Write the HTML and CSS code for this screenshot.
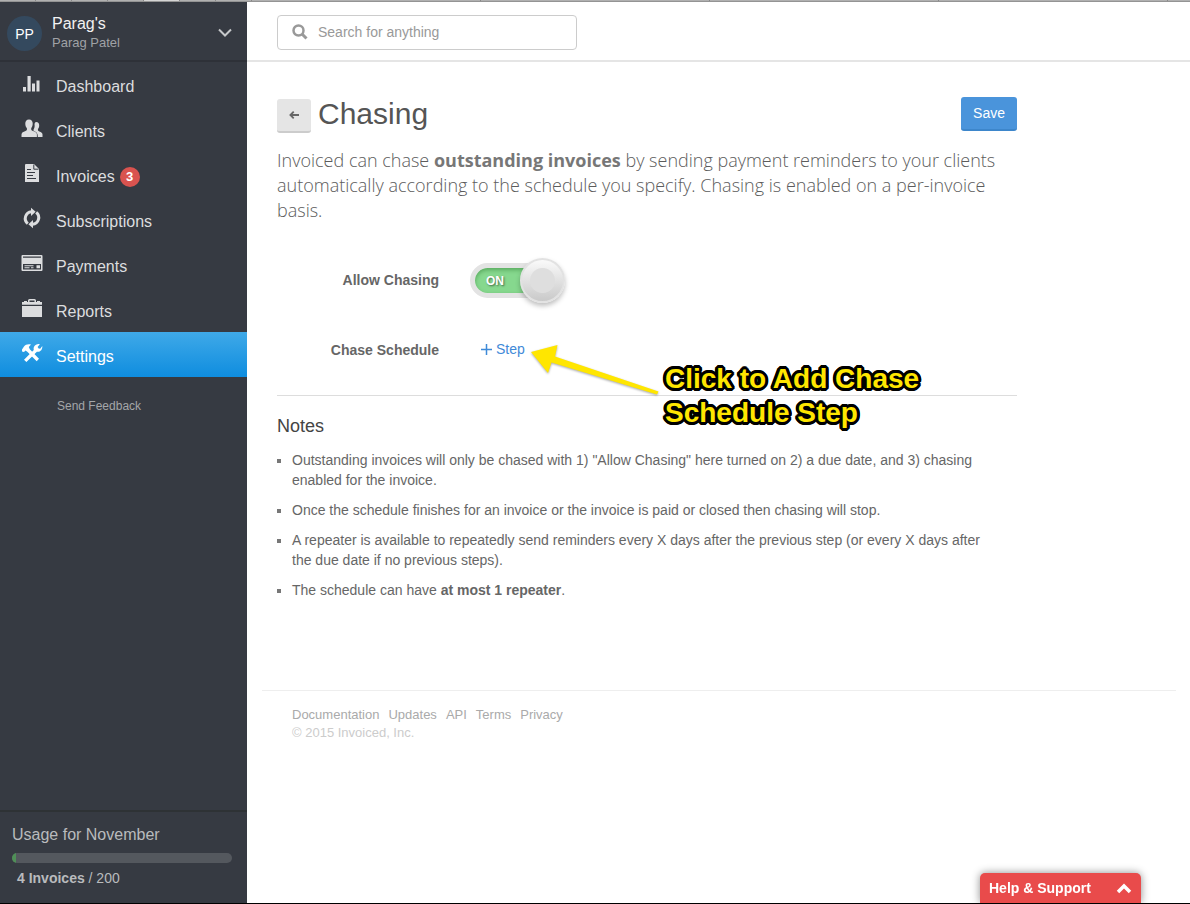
FILE: index.html
```html
<!DOCTYPE html>
<html lang="en">
<head>
<meta charset="utf-8">
<title>Chasing</title>
<link rel="stylesheet" href="styles.css">
</head>
<body>
<div class="tabstrip"><i></i><i></i><i></i><i></i><i class="current"></i><i></i><i></i><i class="wide"></i><i class="wide"></i><i class="wide"></i><i class="wide"></i></div>
<div class="app">
  <aside class="sidebar">
    <button class="account" type="button">
      <span class="avatar">PP</span>
      <span class="account-text"><span class="company">Parag's</span><span class="person">Parag Patel</span></span>
      <svg class="chevron" width="16" height="10" viewBox="0 0 16 10" aria-hidden="true"><path d="M2 1.500l6 6 6-6" fill="none" stroke="#c6c8ca" stroke-width="2"/></svg>
    </button>
    <nav class="nav">
      <a href="#"><svg class="icon" viewBox="0 0 22 22" aria-hidden="true"><path d="M2 15h3v4.500H2zM6.500 4h3.200v15.500H6.500zM11 11.500h3v8h-3zM15.500 8.500h3v11h-3z"/></svg>Dashboard</a>
      <a href="#"><svg class="icon" viewBox="0 0 22 22" aria-hidden="true"><path d="M8 2.500c2.600 0 3.700 1.700 3.700 4 0 2-.7 3.500-1.400 4.500-.3 1.700 0 2.400 1.600 3 2.300.8 3.800 1.600 4 3v3H.5v-2.500c.2-1.900 1.600-2.600 4-3.500 1.600-.6 1.700-1.500 1.300-3-.9-1-1.500-2.500-1.500-4.500 0-2.300 1.100-4 3.700-4z"/><path d="M15.200 5c2 0 3 1.400 3 3.400 0 1.500-.5 2.700-1.200 3.600-.3 1.400 0 2 1.300 2.500 2 .7 3.200 1.400 3.200 3V20h-4.700c0-3.500-.8-4.700-3.800-6-.6-.3-.7-1-.2-2 .8-1 1-3 .7-5 .3-1.300.7-2 1.700-2z"/></svg>Clients</a>
      <a href="#"><svg class="icon" viewBox="0 0 22 22" aria-hidden="true"><path d="M5 2h8l5 5v13H4V3a1 1 0 0 1 1-1z"/><path d="M12.800 2.500v4.700h4.700" stroke="#363a42" stroke-width="1" fill="none"/><path d="M6 7.500h4M6 10.500h8M6 13.500h6M6 16.500h9" stroke="#363a42" stroke-width="1" fill="none"/></svg>Invoices<span class="badge">3</span></a>
      <a href="#"><svg class="icon" viewBox="0 0 22 22" aria-hidden="true"><path d="M6.800 16.600A6.700 6.700 0 0 1 10.500 4.700" fill="none" stroke="currentColor" stroke-width="3"/><path d="M10 .8l4.600 4L10 9z"/><path d="M15.200 5.400A6.700 6.700 0 0 1 11.500 17.300" fill="none" stroke="currentColor" stroke-width="3"/><path d="M12 21.200l-4.600-4L12 13z"/></svg>Subscriptions</a>
      <a href="#"><svg class="icon" viewBox="0 0 22 22" aria-hidden="true"><path d="M1.500 3h19q1 0 1 1v14q0 1-1 1h-19q-1 0-1-1V4q0-1 1-1z"/><path d="M2 4.500h18v1.300H2zM2 12h18v5.500H2z" fill="#363a42"/><path d="M3.500 13.200h9v1h-9zM3.500 15.300h5v1h-5zM10 15.300h2.500v1H10zM15.500 13.200h3.500v3h-3.500z"/></svg>Payments</a>
      <a href="#"><svg class="icon" viewBox="0 0 22 22" aria-hidden="true"><path d="M1 9h20v11H1zM1 5h2V4h3v1h1V3.500Q7 2 8.500 2h5Q15 2 15 3.500V5h1V4h3v1h2v2.800H1z"/><path d="M8.500 5V3.500h5V5z" fill="#363a42"/></svg>Reports</a>
      <a href="#" class="active" aria-current="page"><svg class="icon" viewBox="0 0 22 22" aria-hidden="true"><path d="M1 9.500V7.500l2-3C4.500 2.500 7 1.700 10 2.500L7.800 5l1 2.200 9.200 9.600-2.300 2.400L6.300 9.800 4.500 8.500 3 10z"/><path d="M16.500 2.300c.8-.3 1.600-.3 2.300-.1L16.600 5l1 1.600 1.600.2L21.300 4c.3 3.500-2 6.300-5.400 5.800L5.400 20 3 17.700 12.800 8c-.7-2.700 1-5.200 3.700-5.700z"/></svg>Settings</a>
    </nav>
    <a class="feedback" href="#">Send Feedback</a>
    <section class="usage">
      <div class="usage-title">Usage for November</div>
      <div class="meter"><div class="meter-fill" style="width:2%"></div></div>
      <div class="usage-count"><b>4 Invoices</b> / 200</div>
    </section>
  </aside>
  <main class="main">
    <header class="topbar">
      <label class="search">
        <svg width="16" height="16" viewBox="0 0 16 16" aria-hidden="true"><circle cx="6.500" cy="6.500" r="5" fill="none" stroke="#999" stroke-width="2.500"/><path d="M10 10l4.500 4.500" stroke="#999" stroke-width="3"/></svg>
        <input type="search" placeholder="Search for anything" aria-label="Search for anything">
      </label>
    </header>
    <div class="content">
      <div class="title-row">
        <button class="back" type="button" aria-label="Back"><svg width="10" height="8" viewBox="0 0 10 8" aria-hidden="true"><path d="M10 4H1.500M4.700.7L1.400 4l3.300 3.300" fill="none" stroke="#666" stroke-width="1.800"/></svg></button>
        <h1>Chasing</h1>
        <button class="save" type="button">Save</button>
      </div>
      <p class="lead">Invoiced can chase <b>outstanding invoices</b> by sending payment reminders to your clients automatically according to the schedule you specify. Chasing is enabled on a per-invoice basis.</p>
      <div class="form">
        <div class="row">
          <label class="row-label" for="allow">Allow Chasing</label>
          <label class="toggle"><input id="allow" type="checkbox" checked><span class="track">ON</span><span class="knob"></span></label>
        </div>
        <div class="row">
          <span class="row-label">Chase Schedule</span>
          <a class="step" href="#"><svg width="11" height="11" viewBox="0 0 11 11" aria-hidden="true"><path d="M5.500 0v11M0 5.500h11" stroke="#3f8ad8" stroke-width="1.500"/></svg>Step</a>
        </div>
        <div class="callout">
          <svg width="136" height="60" viewBox="0 0 136 60" aria-hidden="true"><path d="M4 10L30.500 3l-2.500 11.500L131.500 49.500l-1.500 3L24.500 20.500 21 31z" fill="#ffe600"/></svg>
          <p>Click to Add Chase<br>Schedule Step</p>
        </div>
      </div>
      <section class="notes">
        <h2>Notes</h2>
        <ul>
          <li>Outstanding invoices will only be chased with 1) "Allow Chasing" here turned on 2) a due date, and 3) chasing enabled for the invoice.</li>
          <li>Once the schedule finishes for an invoice or the invoice is paid or closed then chasing will stop.</li>
          <li>A repeater is available to repeatedly send reminders every X days after the previous step (or every X days after the due date if no previous steps).</li>
          <li>The schedule can have <b>at most 1 repeater</b>.</li>
        </ul>
      </section>
    </div>
    <footer class="footer">
      <div class="links"><a href="#">Documentation</a><a href="#">Updates</a><a href="#">API</a><a href="#">Terms</a><a href="#">Privacy</a></div>
      <div>© 2015 Invoiced, Inc.</div>
    </footer>
  </main>
</div>
<button class="help" type="button">Help &amp; Support<svg width="16" height="12" viewBox="0 0 16 12" aria-hidden="true"><path d="M2 10l6-6 6 6" fill="none" stroke="#fff" stroke-width="3.500"/></svg></button>
</body>
</html>
```
FILE: styles.css
```css
* { box-sizing: border-box; }
body {
  margin: 0;
  min-height: 100vh;
  display: flex;
  flex-direction: column;
  border-bottom: 1px solid #000;
  background: #fff;
  color: #666;
  font: 14px/20px "Liberation Sans", Arial, sans-serif;
}
a { color: inherit; text-decoration: none; }
button { border: 0; margin: 0; font: inherit; cursor: pointer; }

.tabstrip { display: flex; height: 2px; background: #b0b0b0; border-bottom: 1px solid #949494; overflow: hidden; }
.tabstrip i { flex: none; width: 36px; border-right: 1px solid #888; }
.tabstrip .current { background: #d4d4d4; }
.tabstrip .wide { width: 229px; }

.app { flex: 1; display: flex; }

.sidebar {
  flex: none;
  width: 247px;
  display: flex;
  flex-direction: column;
  background: #363a42;
  color: #dcdddf;
}
.account {
  display: flex;
  align-items: center;
  height: 60px;
  padding: 4px 14px 0 7px;
  border-bottom: 2px solid #2e3138;
  background: none;
  color: #f2f2f2;
  text-align: left;
}
.avatar {
  width: 35px;
  height: 35px;
  margin-right: 10px;
  border-radius: 50%;
  background: #34495e;
  color: #fff;
  line-height: 36px;
  text-align: center;
}
.account-text { flex: 1; display: flex; flex-direction: column; }
.company { font-size: 16px; }
.person { font-size: 13px; line-height: 18px; color: #a0a2a6; }

.nav { display: flex; flex-direction: column; font-size: 16px; }
.nav a { display: flex; align-items: center; height: 45px; padding: 4px 21px 0; }
.nav .active { background: linear-gradient(#3fa9e8, #0f8ddf); color: #fff; }
.icon { width: 22px; height: 22px; margin: 0 13px 8px 0; fill: currentColor; }
.badge {
  width: 20px;
  height: 20px;
  margin-left: 5px;
  border-radius: 50%;
  background: #d9534f;
  color: #fff;
  font-size: 13px;
  font-weight: bold;
  text-align: center;
}
.feedback { margin: 19px 0 0 57px; font-size: 12px; color: #a4a6a9; }

.usage {
  margin-top: auto;
  padding: 13px 15px 15px 12px;
  border-top: 2px solid #2e3235;
  color: #b9bbbd;
}
.usage-title { font-size: 16px; }
.meter { height: 10px; margin: 8px 0 5px; border-radius: 5px; background: #54585e; overflow: hidden; }
.meter-fill { height: 100%; background: #4f8f57; }
.usage-count { padding-left: 5px; }

.main { flex: 1; min-width: 0; }
.topbar { padding: 13px 30px 10px; border-bottom: 2px solid #e5e5e5; }
.search {
  display: flex;
  align-items: center;
  gap: 10px;
  width: 300px;
  height: 35px;
  padding: 0 14px 2px;
  border: 1px solid #ccc;
  border-radius: 4px;
}
.search input {
  flex: 1;
  min-width: 0;
  padding: 0;
  border: 0;
  outline: 0;
  background: none;
  font: inherit;
}
.search input::placeholder { color: #999; }

.content { max-width: 800px; padding: 35px 30px 0; }
.title-row { display: flex; gap: 7px; height: 36px; }
h1 { flex: 1; margin: 0; font-size: 30px; line-height: 34px; font-weight: normal; color: #555; }
.back {
  width: 34px;
  height: 34px;
  margin-top: 2px;
  padding: 0;
  border-bottom: 2px solid #ccc;
  border-radius: 3px;
  background: #e5e5e5;
}
.back svg { display: block; margin: auto; }
.save {
  height: 34px;
  padding: 0 12px;
  border-bottom: 2px solid #3d86cb;
  border-radius: 3px;
  background: #4a94db;
  color: #fff;
}
.lead {
  margin: 15px 0 22px;
  color: #5c5c5c;
  font: 300 18px/25px "Open Sans", "Noto Sans", sans-serif;
}
.lead b { font-weight: 700; color: #777; }

.form { position: relative; padding-bottom: 10px; border-bottom: 1px solid #ddd; }
.row { display: flex; align-items: center; height: 70px; }
.row-label { width: 162px; font-weight: bold; text-align: right; }
.toggle { position: relative; width: 95px; height: 35px; margin-left: 31px; cursor: pointer; }
.toggle input { position: absolute; opacity: 0; }
.track {
  display: block;
  width: 86px;
  height: 35px;
  padding-left: 11px;
  border: 5px solid #e3e3e3;
  border-radius: 18px;
  background: #86d88e;
  box-shadow: inset 0 2px 4px rgba(0, 80, 0, .35);
  color: #fff;
  font-size: 12px;
  font-weight: bold;
  line-height: 27px;
  text-shadow: 1px 1px 2px rgba(0, 0, 0, .5);
}
.knob {
  position: absolute;
  top: -5px;
  right: 0;
  width: 45px;
  height: 45px;
  border: 2px solid #e2e2e2;
  border-radius: 50%;
  background: radial-gradient(circle, #dedede 12px, transparent 13px), linear-gradient(#fafafa, #c9c9c9);
  box-shadow: 0 3px 5px rgba(0, 0, 0, .25);
}
.step { display: flex; align-items: center; gap: 4px; margin-left: 42px; padding-bottom: 2px; color: #3f8ad8; }

.callout { position: absolute; top: 97px; left: 250px; display: flex; pointer-events: none; }
.callout svg { filter: drop-shadow(0 1px 1px rgba(0, 0, 0, .35)); }
.callout p {
  margin: 20px 0 0 2px;
  color: #ffe600;
  font-size: 28px;
  font-weight: bold;
  line-height: 34px;
  white-space: nowrap;
  text-shadow:
    3px 0 #000, -3px 0 #000, 0 3px #000, 0 -3px #000,
    2px 2px #000, -2px 2px #000, 2px -2px #000, -2px -2px #000,
    3px 1px #000, -3px 1px #000, 3px -1px #000, -3px -1px #000,
    1px 3px #000, -1px 3px #000, 1px -3px #000, -1px -3px #000;
}

.notes h2 { margin: 20px 0 14px; font-size: 18px; line-height: 20px; font-weight: normal; color: #444; }
.notes ul { margin: 0; padding: 0 15px; list-style: none; }
.notes li { margin-bottom: 10px; }
.notes li::before {
  content: "";
  float: left;
  width: 4px;
  height: 4px;
  margin: 9px 0 0 -15px;
  background: #777;
}

.footer {
  margin: 90px 14px 0 15px;
  padding: 15px 30px;
  border-top: 1px solid #eee;
  color: #ccc;
  font-size: 13px;
  line-height: 18px;
}
.links { display: flex; gap: 9px; color: #aaa; }

.help {
  position: fixed;
  right: 49px;
  bottom: 1px;
  display: flex;
  align-items: center;
  justify-content: space-between;
  width: 161px;
  height: 30px;
  padding: 0 9px;
  border-radius: 5px 5px 0 0;
  background: #e94b4b;
  box-shadow: 0 0 8px rgba(0, 0, 0, .45);
  color: #fff;
  font-weight: bold;
  clip-path: inset(-10px -10px 0 -10px);
}
```
